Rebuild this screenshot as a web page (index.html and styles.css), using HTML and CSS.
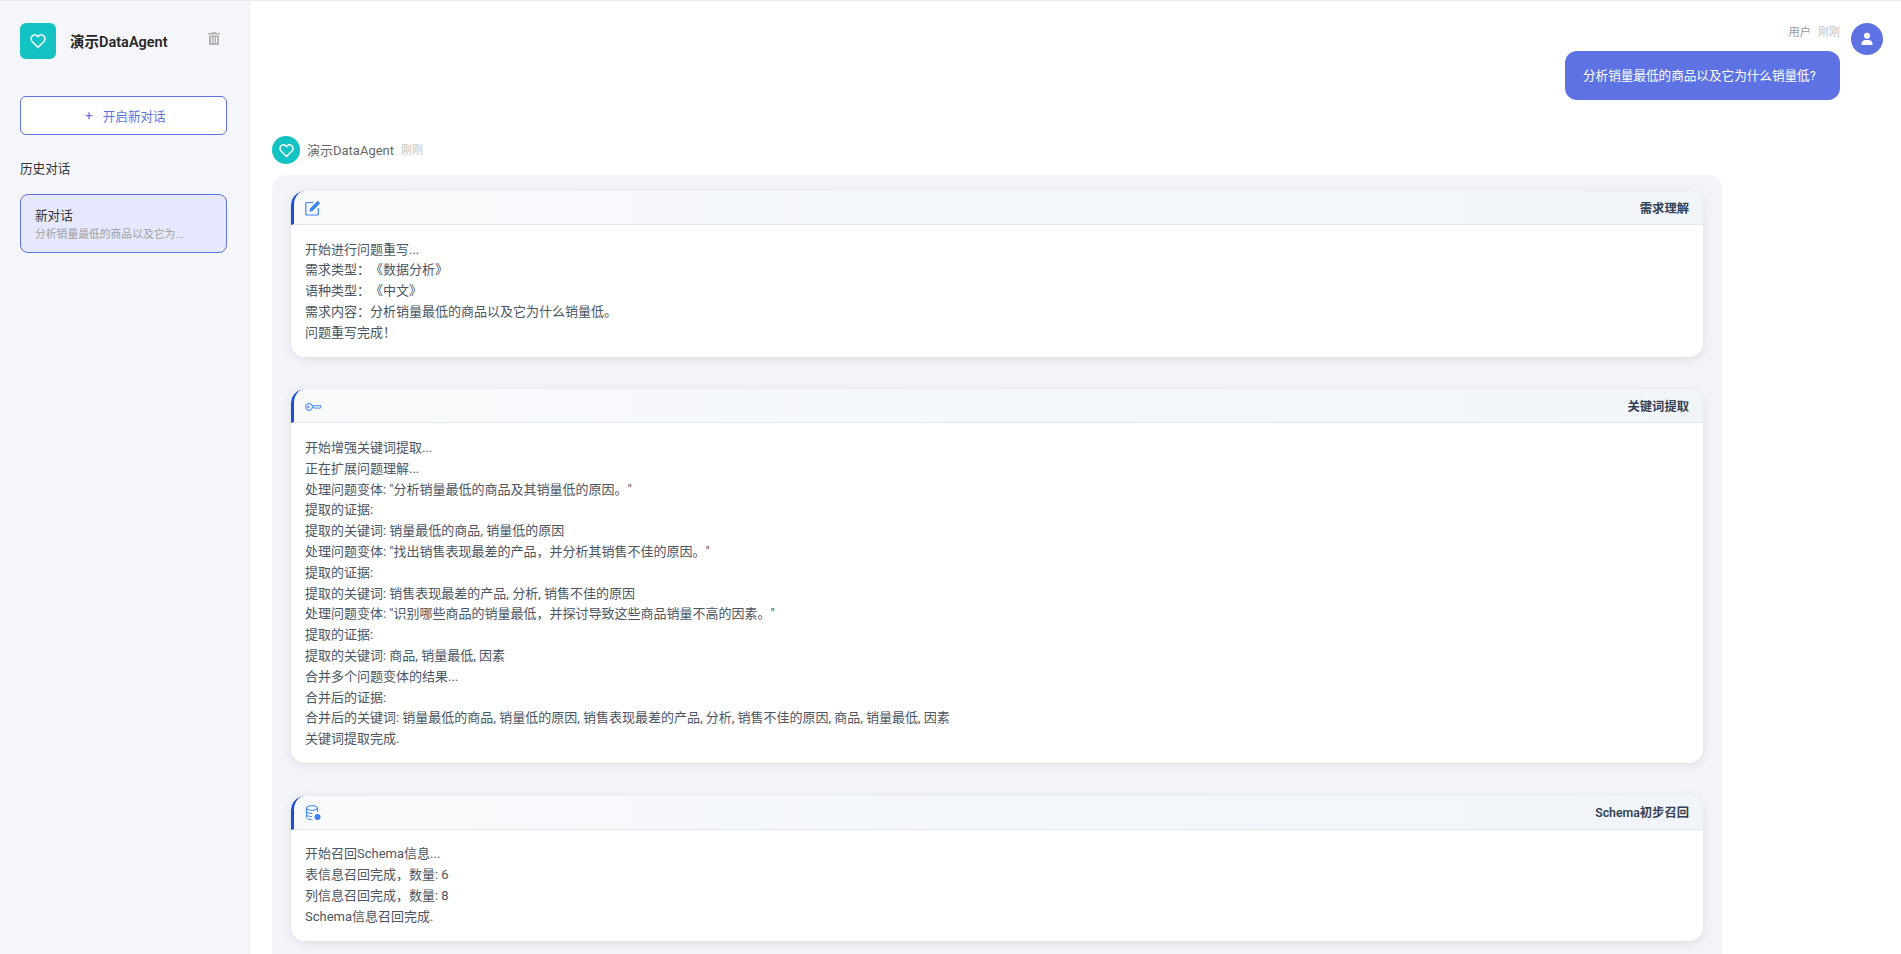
FILE: index.html
```html
<!DOCTYPE html>
<html lang="zh-CN">
<head>
<meta charset="utf-8">
<title>演示DataAgent</title>
<link rel="stylesheet" href="styles.css">
</head>
<body>
<div class="app">
  <aside class="sidebar">
    <div class="brand">
      <div class="logo">
        <svg width="18" height="18" viewBox="0 0 24 24" fill="none" stroke="#fff" stroke-width="1.9"><path d="M12 20.5 4.2 12.6a5 5 0 0 1 0-7.1 5 5 0 0 1 7 0L12 6.3l.8-.8a5 5 0 0 1 7 0 5 5 0 0 1 0 7.1Z"/></svg>
      </div>
      <div class="brand-name">演示DataAgent</div>
      <svg class="trash" width="12" height="13" viewBox="0 0 12 13" fill="#b4b4b4"><path d="M4 0h4l.5 1H12v1.5H0V1h3.500Z"/><path d="M1 3.500h10V12a1 1 0 0 1-1 1H2a1 1 0 0 1-1-1Zm2 1.500v6h1V5Zm2.500 0v6h1V5ZM8 5v6h1V5Z"/></svg>
    </div>
    <button class="new-chat"><span class="plus">+</span>开启新对话</button>
    <div class="history-label">历史对话</div>
    <div class="history-item">
      <div class="history-title">新对话</div>
      <div class="history-sub">分析销量最低的商品以及它为...</div>
    </div>
  </aside>
  <main class="main">
    <div class="user-msg">
      <div class="user-col">
        <div class="user-meta"><span class="user-name">用户</span><span class="time">刚刚</span></div>
        <div class="user-bubble">分析销量最低的商品以及它为什么销量低?</div>
      </div>
      <div class="user-avatar">
        <svg width="14" height="14" viewBox="0 0 14 14" fill="#fff"><circle cx="7" cy="3.800" r="3"/><path d="M1.500 13v-1.200C1.500 9.500 3.500 8 5.500 8h3c2 0 4 1.500 4 3.800V13Z"/></svg>
      </div>
    </div>
    <div class="agent-head">
      <div class="agent-avatar">
        <svg width="17" height="17" viewBox="0 0 24 24" fill="none" stroke="#fff" stroke-width="2"><path d="M12 20.5 4.2 12.6a5 5 0 0 1 0-7.1 5 5 0 0 1 7 0L12 6.3l.8-.8a5 5 0 0 1 7 0 5 5 0 0 1 0 7.1Z"/></svg>
      </div>
      <span class="agent-name">演示DataAgent</span><span class="time">刚刚</span>
    </div>
    <div class="agent-bubble">
      <section class="step">
        <header class="step-head">
          <svg width="16" height="16" viewBox="0 0 16 16" fill="none" stroke="#3b82f6" stroke-width="1.200"><path d="M8 2.500H2A1.200 1.200 0 0 0 .8 3.700v10.100A1.200 1.200 0 0 0 2 15h10.100a1.200 1.200 0 0 0 1.200-1.200V8"/><path fill="#3b82f6" stroke="none" d="M12.800.8l2.400 2.400-7.700 7.700-3.200.8.800-3.200Z"/></svg>
          <span class="step-title">需求理解</span>
        </header>
        <div class="step-body">
          <div>开始进行问题重写...</div>
          <div>需求类型：《数据分析》</div>
          <div>语种类型：《中文》</div>
          <div>需求内容：分析销量最低的商品以及它为什么销量低。</div>
          <div>问题重写完成！</div>
        </div>
      </section>
      <section class="step">
        <header class="step-head">
          <svg width="17" height="16" viewBox="0.500 -1 17 16" fill="none" stroke="#3b82f6" stroke-width="1"><circle cx="4.500" cy="8" r="3.500"/><circle cx="3.800" cy="8" r=".9"/><path d="M8 6.700h8.300v2l-1 .8-1-.8-1 .8-1-.8-1 .8-1-.8H8"/></svg>
          <span class="step-title">关键词提取</span>
        </header>
        <div class="step-body">
          <div>开始增强关键词提取...</div>
          <div>正在扩展问题理解...</div>
          <div>处理问题变体: "分析销量最低的商品及其销量低的原因。"</div>
          <div>提取的证据:</div>
          <div>提取的关键词: 销量最低的商品, 销量低的原因</div>
          <div>处理问题变体: "找出销售表现最差的产品，并分析其销售不佳的原因。"</div>
          <div>提取的证据:</div>
          <div>提取的关键词: 销售表现最差的产品, 分析, 销售不佳的原因</div>
          <div>处理问题变体: "识别哪些商品的销量最低，并探讨导致这些商品销量不高的因素。"</div>
          <div>提取的证据:</div>
          <div>提取的关键词: 商品, 销量最低, 因素</div>
          <div>合并多个问题变体的结果...</div>
          <div>合并后的证据:</div>
          <div>合并后的关键词: 销量最低的商品, 销量低的原因, 销售表现最差的产品, 分析, 销售不佳的原因, 商品, 销量最低, 因素</div>
          <div>关键词提取完成.</div>
        </div>
      </section>
      <section class="step">
        <header class="step-head">
          <svg width="16" height="16" viewBox="-0.500 -1 16 16" fill="none" stroke="#3b82f6" stroke-width="1"><ellipse cx="6.500" cy="3" rx="5.500" ry="2.300"/><path d="M1 3v9.500c0 1.300 2.500 2.300 6 2.300M12 3v4M1 6.200c0 1.300 2.500 2.300 5.500 2.300M1 9.400c0 1.300 2.500 2.300 5.500 2.300"/><circle cx="12" cy="12" r="3" fill="#3b82f6" stroke="none"/></svg>
          <span class="step-title">Schema初步召回</span>
        </header>
        <div class="step-body">
          <div>开始召回Schema信息...</div>
          <div>表信息召回完成，数量: 6</div>
          <div>列信息召回完成，数量: 8</div>
          <div>Schema信息召回完成.</div>
        </div>
      </section>
    </div>
  </main>
</div>
</body>
</html>
```
FILE: styles.css
```css
* { box-sizing: border-box; }
html, body { margin: 0; height: 100%; overflow: hidden; background: #fff; }
body {
  font-family: Roboto, "Noto Sans CJK SC", sans-serif;
  font-size: 12.6px;
  color: #4b5563;
  text-spacing-trim: space-all;
}
.app { display: flex; height: 954px; border-top: 1px solid #e8e9ec; overflow: hidden; }

.sidebar {
  width: 250px; flex: none; padding: 22px 22px 0 20px;
  background: #f5f6fb; border-right: 1px solid #eceef3;
}
.brand { display: flex; align-items: flex-start; height: 36px; }
.logo {
  width: 36px; height: 36px; border-radius: 6px; background: #13c2c2;
  display: flex; align-items: center; justify-content: center; flex: none;
}
.brand-name { margin: 10px 0 0 14px; font-size: 14.5px; line-height: 20px; font-weight: 600; color: #262626; flex: 1; }
.trash { margin: 9px 7px 0 0; flex: none; }
.new-chat {
  display: flex; align-items: center; justify-content: center; width: 100%; height: 39px;
  margin-top: 37px; background: #fff; border: 1px solid #5e72e4; border-radius: 6px;
  font: inherit; font-size: 12.6px; color: #5e72e4; padding: 0 0 0 4px;
}
.plus { margin-right: 10px; font-size: 13px; line-height: 1; }
.history-label { margin-top: 24px; font-size: 12.6px; line-height: 20px; color: #333; }
.history-item {
  margin-top: 15px; height: 59px; padding: 12px 14px 0;
  background: #e6e9fd; border: 1px solid #5e72e4; border-radius: 8px;
}
.history-title { font-size: 12.6px; line-height: 18px; color: #333; }
.history-sub { margin-top: 2px; font-size: 10.8px; line-height: 15px; color: #a0a0a0; white-space: nowrap; }

.main { flex: 1; min-width: 0; padding: 22px 18px 0 22px; overflow: hidden; }
.user-msg { display: flex; justify-content: flex-end; gap: 11px; }
.user-col { display: flex; flex-direction: column; align-items: flex-end; }
.user-meta { display: flex; gap: 7px; height: 28px; padding: 1px 0 0; font-size: 11.2px; line-height: 18px; }
.user-name { color: #999; }
.time { color: #c4c4c4; font-size: 11px; }
.user-bubble {
  height: 49px; padding: 14px 18px; line-height: 21px; color: #fff;
  background: #5e72e4; border-radius: 12px;
  display: flex; align-items: center; width: 275px;
}
.user-avatar {
  width: 32px; height: 32px; border-radius: 50%; background: #5e72e4; flex: none;
  display: flex; align-items: center; justify-content: center;
}
.agent-head { display: flex; align-items: center; margin-top: 36px; height: 28px; }
.agent-avatar {
  width: 28px; height: 28px; border-radius: 50%; background: #13c2c2; flex: none;
  display: flex; align-items: center; justify-content: center; margin-right: 7px;
}
.agent-name { font-size: 13px; color: #666; margin: 0 7px 2px 0; }
.agent-head .time { margin-bottom: 2px; }
.agent-bubble {
  width: 1450px; margin-top: 11px; padding: 16px 19px 120px;
  background: #f2f4f9; border-radius: 14px 14px 0 0;
  display: flex; flex-direction: column; gap: 32.5px;
}
.step {
  background: #fff; border-radius: 14px; overflow: hidden;
  box-shadow: 0 2px 10px rgba(30, 41, 59, .1);
}
.step-head {
  display: flex; align-items: center; justify-content: space-between; height: 34px;
  padding: 0 14px 0 11px; border-left: 3px solid #1d4ed8; border-bottom: 1px solid #e2e8f0;
  background: linear-gradient(90deg, #f8fafc, #f1f5f9);
  border-top-left-radius: 14px;
}
.step-title { font-size: 12.3px; font-weight: 600; color: #334155; }
.step-body { padding: 14.5px 14px 13.5px; font-size: 13px; line-height: 20.8px; color: #4b5563; }
```
